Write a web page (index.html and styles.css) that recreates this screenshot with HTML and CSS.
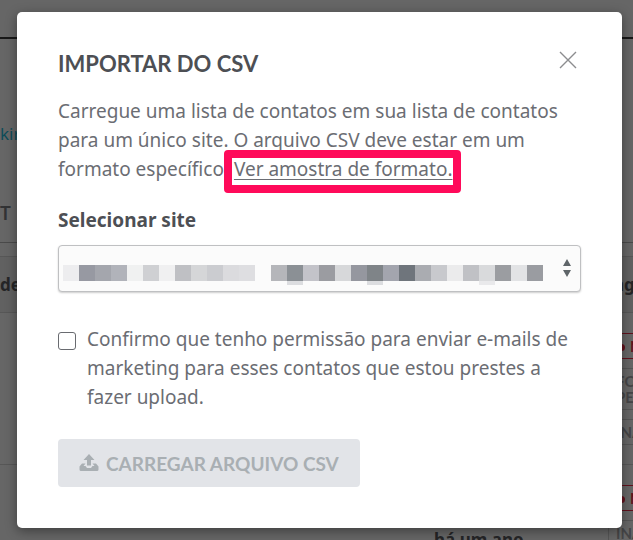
FILE: index.html
```html
<!DOCTYPE html>
<html lang="pt-BR">
<head>
    <meta charset="UTF-8">
    <meta name="viewport" content="width=device-width, initial-scale=1.0">
    <title>Importar do CSV</title>
    <link rel="stylesheet" href="styles.css">
</head>
<body>

    <!-- Página de contatos -->
    <main class="page">
        <div class="topbar"></div>
        <div class="breadcrumb"><a href="#">kir</a></div>
        <div class="tabs"><span class="tab">T</span></div>
        <table class="contacts">
            <thead>
                <tr><th>de</th><th></th><th class="tags-head">ng</th></tr>
            </thead>
            <tbody>
                <tr>
                    <td></td>
                    <td></td>
                    <td class="tags">
                        <div class="tag tag-red"><i></i>N</div>
                        <div class="tag">FO<br>PE</div>
                        <div class="tag">INA</div>
                    </td>
                </tr>
                <tr>
                    <td></td>
                    <td class="when">há um ano</td>
                    <td class="tags">
                        <div class="tag tag-red"><i></i>N</div>
                        <div class="tag">INA</div>
                    </td>
                </tr>
            </tbody>
        </table>
    </main>

    <!-- Janela de importação -->
    <div class="overlay">
        <form class="modal" role="dialog" aria-labelledby="modal-title">
            <div class="modal-header">
                <h2 id="modal-title">IMPORTAR DO CSV</h2>
                <button type="button" class="close" aria-label="Fechar">
                    <svg width="18" height="18" viewBox="0 0 18 18">
                        <path d="M1 1L17 17M17 1L1 17" stroke="#8c8d8f" stroke-width="1.4" fill="none"/>
                    </svg>
                </button>
            </div>

            <p class="intro">Carregue uma lista de contatos em sua lista de contatos para um único site. O arquivo CSV deve estar em um formato específico. <a href="#" class="sample">Ver amostra de formato.</a></p>

            <label class="field-label" for="site">Selecionar site</label>
            <div class="select-box">
                <select id="site">
                    <option></option>
                </select>
                <svg class="mosaic" width="480" height="20" viewBox="0 0 480 20" shape-rendering="crispEdges" aria-hidden="true">
                    <path fill="#ededef" d="M0 0h16v16H0z"/>
                    <path fill="#9799a2" d="M16 0h16v16H16z"/>
                    <path fill="#a4a6ad" d="M32 0h16v16H32z"/>
                    <path fill="#b1b3ba" d="M48 0h16v16H48z"/>
                    <path fill="#f0f1f1" d="M64 0h16v16H64z"/>
                    <path fill="#cfd0d3" d="M80 0h16v16H80z"/>
                    <path fill="#f0f0f1" d="M96 0h16v16H96z"/>
                    <path fill="#bfc0c4" d="M112 0h16v16h-16z"/>
                    <path fill="#d5d6d8" d="M128 0h16v16h-16z"/>
                    <path fill="#cbccd0" d="M144 0h16v16h-16z"/>
                    <path fill="#dbdbde" d="M160 0h16v16h-16z"/>
                    <path fill="#dedee1" d="M176 0h16v16h-16z"/>
                    <path fill="#b5b6ba" d="M208 0h16v16h-16z"/>
                    <path fill="#8b9095" d="M224 0h16v16h-16z"/>
                    <path fill="#c3c3c9" d="M240 0h16v16h-16z"/>
                    <path fill="#9b9ca1" d="M256 0h16v16h-16z"/>
                    <path fill="#d7d8da" d="M272 0h16v16h-16z"/>
                    <path fill="#95979f" d="M288 0h16v16h-16z"/>
                    <path fill="#7f8488" d="M304 0h16v16h-16z"/>
                    <path fill="#a3a5ae" d="M320 0h16v16h-16z"/>
                    <path fill="#6f757c" d="M336 0h16v16h-16z"/>
                    <path fill="#aaacb1" d="M352 0h16v16h-16z"/>
                    <path fill="#c8c9cd" d="M368 0h16v16h-16z"/>
                    <path fill="#ebebec" d="M384 0h16v16h-16z"/>
                    <path fill="#c0c1c5" d="M400 0h16v16h-16z"/>
                    <path fill="#d9dadc" d="M416 0h16v16h-16z"/>
                    <path fill="#9b9da1" d="M432 0h16v16h-16z"/>
                    <path fill="#e2e3e5" d="M448 0h16v16h-16z"/>
                    <path fill="#9a9ca1" d="M464 0h16v16h-16z"/>
                    <path fill="#dcdde0" d="M224 16h16v4h-16zM304 16h16v4h-16z"/>
                    <path fill="#e9e9eb" d="M416 16h16v4h-16z"/>
                </svg>
                <svg class="arrows" width="8" height="18" viewBox="0 0 8 18" aria-hidden="true">
                    <path d="M4 0L8 7H0zM0 11H8L4 18z" fill="#5f6569"/>
                </svg>
            </div>

            <div class="consent">
                <input type="checkbox" id="consent">
                <label for="consent">Confirmo que tenho permissão para enviar e-mails de marketing para esses contatos que estou prestes a fazer upload.</label>
            </div>

            <button type="submit" class="upload" disabled>
                <svg width="20" height="18" viewBox="0 0 20 18" aria-hidden="true">
                    <path d="M10 0L15.5 6H12V11.5H8V6H4.500z" fill="#a9afb3"/>
                    <path d="M3 9.500H6.500L4.500 12H6.500L8 14H12L13.500 12H15.500L13.500 9.500H17L19.500 12.500V15.500Q19.500 17 18 17H2Q.5 17 .5 15.500V12.500z" fill="#a9afb3"/>
                </svg>
                <span>CARREGAR ARQUIVO CSV</span>
            </button>
        </form>
    </div>

</body>
</html>
```

FILE: styles.css
```css
* {
    box-sizing: border-box;
}

body {
    margin: 0;
    height: 100vh;
    overflow: hidden;
    position: relative;
    font-family: "Noto Sans", "Open Sans", sans-serif;
    font-size: 19px;
    line-height: 29px;
    color: #6b6d73;
    background-color: #ffffff;
}

/* Página de fundo */
.page {
    height: 100%;
    overflow: hidden;
}

.topbar {
    height: 39px;
    border-bottom: 2px solid #222222;
}

.breadcrumb {
    height: 160px;
    padding-top: 80px;
    font-size: 17px;
}

.breadcrumb a {
    color: #00b4d8;
    text-decoration: none;
}

.tabs {
    height: 44px;
    font-family: Lato, sans-serif;
    font-size: 18px;
    font-weight: bold;
    border-bottom: 1px solid #b0b0b0;
}

.contacts {
    width: 100%;
    margin-top: 13px;
    table-layout: fixed;
    border-collapse: collapse;
}

.contacts th {
    height: 56px;
    padding: 0;
    font-size: 17px;
    text-align: left;
    color: #45474c;
    background-color: #f0f0f0;
    border-top: 1px solid #d5d5d5;
    border-bottom: 1px solid #d5d5d5;
}

.contacts th:first-child {
    width: 434px;
}

.contacts th:last-child {
    width: 25px;
}

.contacts .tags-head {
    padding-left: 5px;
}

.contacts td {
    height: 152px;
    padding: 0;
    vertical-align: top;
    border-bottom: 1px solid #d5d5d5;
}

.contacts .when {
    padding-top: 60px;
    font-size: 17px;
    font-weight: bold;
    color: #45474c;
}

.contacts .tags {
    padding-top: 20px;
}

.tag {
    width: 80px;
    margin-bottom: 9px;
    padding: 4px 7px;
    font-family: Lato, sans-serif;
    font-size: 15px;
    font-weight: bold;
    line-height: 16px;
    color: #a0a2a6;
    border: 1px solid #d0d0d0;
}

.tag-red {
    color: #f01030;
    border-color: #f01030;
}

.tag-red i {
    display: inline-block;
    width: 7px;
    height: 7px;
    margin: 0 5px 1px 2px;
    border-radius: 50%;
    background-color: #f01030;
}

/* Janela */
.overlay {
    position: absolute;
    top: 0;
    left: 0;
    width: 100%;
    min-height: 100%;
    padding: 12px 11px 12px 17px;
    background-color: rgba(20, 20, 20, 0.65);
}

.modal {
    padding: 36px 41px 41px;
    border-radius: 5px;
    background-color: #ffffff;
    box-shadow: 0 3px 12px rgba(0, 0, 0, 0.4);
}

.modal-header {
    display: flex;
    justify-content: space-between;
    align-items: flex-start;
}

.modal-header h2 {
    margin: 0;
    font-family: Lato, sans-serif;
    font-size: 22px;
    font-weight: bold;
    line-height: 32px;
    color: #4d4f54;
}

.close {
    display: flex;
    padding: 3px 4px;
    border: none;
    background: none;
    cursor: pointer;
}

.intro {
    margin: 17px 0 20px;
}

.sample {
    position: relative;
    white-space: nowrap;
    color: inherit;
    text-decoration-thickness: 1px;
    text-underline-offset: 3px;
}

.sample::after {
    content: "";
    position: absolute;
    inset: -6px -9px -11px -10px;
    border: 8px solid #ff0a5a;
    border-radius: 4px;
}

.field-label {
    display: block;
    margin-bottom: 9px;
    line-height: 32px;
    font-weight: bold;
    color: #4d4f54;
}

.select-box {
    position: relative;
}

.select-box select {
    display: block;
    width: 100%;
    height: 47px;
    appearance: none;
    border: 1px solid #bfc0c2;
    border-radius: 4px;
    background-color: #fbfbfb;
    box-shadow: 0 1px 2px rgba(0, 0, 0, 0.2);
}

.mosaic,
.arrows {
    position: absolute;
    pointer-events: none;
}

.mosaic {
    top: 20px;
    left: 5px;
}

.arrows {
    top: 14px;
    right: 10px;
}

.consent {
    display: flex;
    align-items: flex-start;
    gap: 11px;
    margin: 33px 0 27px;
}

.consent input {
    flex: none;
    width: 18px;
    height: 18px;
    margin: 7px 0 0;
    appearance: none;
    border: 1px solid #696b70;
    border-radius: 3px;
    background-color: #ffffff;
}

.upload {
    display: flex;
    align-items: center;
    gap: 7px;
    height: 48px;
    padding: 0 21px;
    font-family: Lato, sans-serif;
    font-size: 19px;
    font-weight: bold;
    color: #a9afb3;
    border: none;
    border-radius: 4px;
    background-color: #e2e4e8;
}
```
